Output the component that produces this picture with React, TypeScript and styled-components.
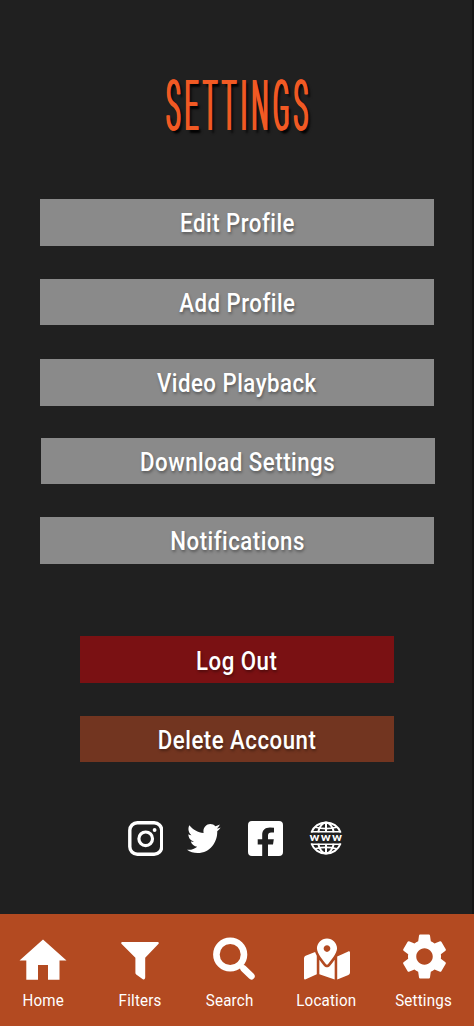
import React from 'react';
import styled, { createGlobalStyle } from 'styled-components';
import { FaTwitter, FaMapMarkedAlt } from 'react-icons/fa';
import { MdSettings } from 'react-icons/md';

const GlobalStyle = createGlobalStyle`
  * { box-sizing: border-box; }
  body { margin: 0; background: #202020; }
`;

const Screen = styled.div`
  display: flex;
  flex-direction: column;
  width: 474px;
  height: 1026px;
  overflow: hidden;
  background: linear-gradient(to right, #202020 472px, #161616 472px);
  font-family: Roboto, "Liberation Sans", sans-serif;
  color: #fff;
`;

const Title = styled.h1`
  display: flex;
  justify-content: center;
  margin: 0;
  height: 199px;
  padding-top: 70px;
  padding-left: 4px;
  font-size: 71px;
  line-height: 72px;
  font-weight: 300;
  color: #f15a24;
`;

const TitleText = styled.span`
  display: block;
  transform: scaleX(0.335);
  letter-spacing: 13.5px;
  text-shadow: 1.5px 0 #f15a24, -1.5px 0 #f15a24, 3px 0 #f15a24, -3px 0 #f15a24, 9px 3px 4px #000;
`;

const Menu = styled.nav`
  display: flex;
  flex-direction: column;
  align-items: flex-start;
  padding-left: 40.3px;
  height: 437.3px;
`;

const Button = styled.button<{ $gap?: number; $shift?: number; $tone?: string; $narrow?: boolean }>`
  display: flex;
  flex: none;
  align-items: center;
  justify-content: center;
  width: ${(p) => (p.$narrow ? 313.8 : 393.7)}px;
  height: 46.5px;
  margin: 0 0 ${(p) => p.$gap ?? 33}px ${(p) => p.$shift ?? 0}px;
  padding: 0;
  border: 0;
  background: ${(p) => p.$tone ?? '#8a8a8a'};
  color: #fff;
  font: 500 25px/46px Roboto, "Liberation Sans", sans-serif;
`;

const Label = styled.span<{ $drop?: number }>`
  display: block;
  flex: none;
  padding-top: ${(p) => p.$drop ?? 4}px;
  white-space: nowrap;
  transform: scaleX(0.89);
  letter-spacing: 0.55px;
  text-shadow: 1px 2px 3px rgba(0, 0, 0, 0.35);
`;

const Account = styled.section`
  display: flex;
  flex-direction: column;
  padding-left: 80.2px;
  height: 184.7px;
`;

const Social = styled.div`
  display: flex;
  align-items: center;
  height: 35px;
  padding-left: 127.5px;
  margin-bottom: 58.3px;
  svg { flex: none; display: block; }
`;

const TwitterIcon = styled(FaTwitter)`
  width: 33.7px;
  height: 29px;
`;

const Gap = styled.span<{ $w: number }>`
  flex: none;
  width: ${(p) => p.$w}px;
`;

const TabBar = styled.footer`
  display: grid;
  grid-template-columns: 86px 108px 72px 121px 74px;
  flex: 1;
  background: #b34a21;
`;

const Tab = styled.div`
  display: flex;
  flex-direction: column;
  align-items: center;
`;

const TabIcon = styled.div<{ $indent?: number; $drop?: number }>`
  display: flex;
  align-items: flex-end;
  justify-content: center;
  height: 66px;
  padding-left: ${(p) => p.$indent ?? 0}px;
  svg { display: block; margin-bottom: ${(p) => -(p.$drop ?? 0)}px; }
`;

const TabLabel = styled.span`
  margin-top: 10px;
  font-size: 16.3px;
  line-height: 22px;
  white-space: nowrap;
  transform: scaleX(0.93);
  letter-spacing: 0.2px;
`;

const InstagramIcon = () => (
  <svg width="35.5" height="35" viewBox="0 0 35.5 35" fill="none" stroke="#fff">
    <rect x="1.8" y="1.8" width="31.9" height="31.4" rx="7.5" strokeWidth="3.4" />
    <circle cx="17.7" cy="17.8" r="6.8" strokeWidth="3.2" />
    <circle cx="26.6" cy="9" r="1.9" fill="#fff" stroke="none" />
  </svg>
);

const FacebookIcon = () => (
  <svg width="35" height="35" viewBox="0 0 35 35" fill="#fff">
    <path d="M4 0H31Q35 0 35 4V31Q35 35 31 35H20V23.5H25L25.8 18.3H20V14.6Q20 11.5 23.2 11.5H26V6.8Q24.3 6.5 22 6.5C17 6.5 14.2 9.2 14.2 14V18.3H9.7V23.5H14.2V35H4Q0 35 0 31V4Q0 0 4 0Z" />
  </svg>
);

const GlobeIcon = () => (
  <svg width="34" height="34" viewBox="0 0 34 34" fill="none" stroke="#fff" strokeWidth="2">
    <path d="M2.4 11.5A15.6 15.6 0 0 1 31.6 11.5M2.4 22.5A15.6 15.6 0 0 0 31.6 22.5" />
    <path d="M9.2 11.2C10.4 6 13.3 1.8 17 1.5C20.7 1.8 23.6 6 24.8 11.2M9.2 22.8C10.4 28 13.3 32.2 17 32.5C20.7 32.2 23.6 28 24.8 22.8M17 1.5V11M17 23V32.5" />
    <path d="M2 10.8H32M2 23.2H32M6.2 6.2Q17 9 27.8 6.2M6.2 27.8Q17 25 27.8 27.8" strokeWidth="1.6" />
    <text x="17.4" y="19.7" fill="#fff" stroke="none" fontSize="10.5" fontWeight="600" letterSpacing="1" textAnchor="middle" textLength="34" lengthAdjust="spacingAndGlyphs" fontFamily="Roboto, sans-serif">www</text>
  </svg>
);

const HomeIcon = () => (
  <svg width="48" height="41" viewBox="0 0 48 41" fill="#fff">
    <path d="M24 0.5L47.5 21.5H40.5V40.8H29V26H19V40.8H7.3V21.5H0.5Z" />
  </svg>
);

const FilterIcon = () => (
  <svg width="38" height="39" viewBox="0 0 38 39" fill="#fff">
    <path d="M1.2 1H36.8Q38.2 1.2 37.6 2.8L24.2 16.8V36.5Q24 39 21.8 38.2L15.2 33.6Q14.4 33 14.4 31.8V16.8L0.4 2.8Q-0.2 1.2 1.2 1Z" />
  </svg>
);

const SearchIcon = () => (
  <svg width="42" height="43" viewBox="0 0 42 43" fill="none" stroke="#fff">
    <circle cx="17.2" cy="17.5" r="13.8" strokeWidth="6.6" />
    <path d="M27 28L30 31" strokeWidth="4.5" />
    <path d="M30.6 31.6L38.4 39.2" strokeWidth="6.6" strokeLinecap="round" />
  </svg>
);

export default function App() {
  return (
    <>
      <GlobalStyle />
      <Screen>
        <Title><TitleText>SETTINGS</TitleText></Title>
        <Menu>
          <Button><Label>Edit Profile</Label></Button>
          <Button $gap={34}><Label>Add Profile</Label></Button>
          <Button $gap={32}><Label>Video Playback</Label></Button>
          <Button $shift={0.9} $gap={33}><Label $drop={5}>Download Settings</Label></Button>
          <Button><Label $drop={3}>Notifications</Label></Button>
        </Menu>
        <Account>
          <Button $narrow $tone="#7a1113"><Label>Log Out</Label></Button>
          <Button $narrow $tone="#723520"><Label>Delete Account</Label></Button>
        </Account>
        <Social>
          <InstagramIcon />
          <Gap $w={24.3} />
          <TwitterIcon viewBox="0 48 512 416" preserveAspectRatio="none" />
          <Gap $w={27.3} />
          <FacebookIcon />
          <Gap $w={25.5} />
          <GlobeIcon />
        </Social>
        <TabBar>
          <Tab><TabIcon><HomeIcon /></TabIcon><TabLabel>Home</TabLabel></Tab>
          <Tab><TabIcon><FilterIcon /></TabIcon><TabLabel>Filters</TabLabel></Tab>
          <Tab><TabIcon $indent={8}><SearchIcon /></TabIcon><TabLabel>Search</TabLabel></Tab>
          <Tab><TabIcon $drop={1.5}><FaMapMarkedAlt size={46} /></TabIcon><TabLabel>Location</TabLabel></Tab>
          <Tab><TabIcon $drop={4}><MdSettings size={55} /></TabIcon><TabLabel>Settings</TabLabel></Tab>
        </TabBar>
      </Screen>
    </>
  );
}
